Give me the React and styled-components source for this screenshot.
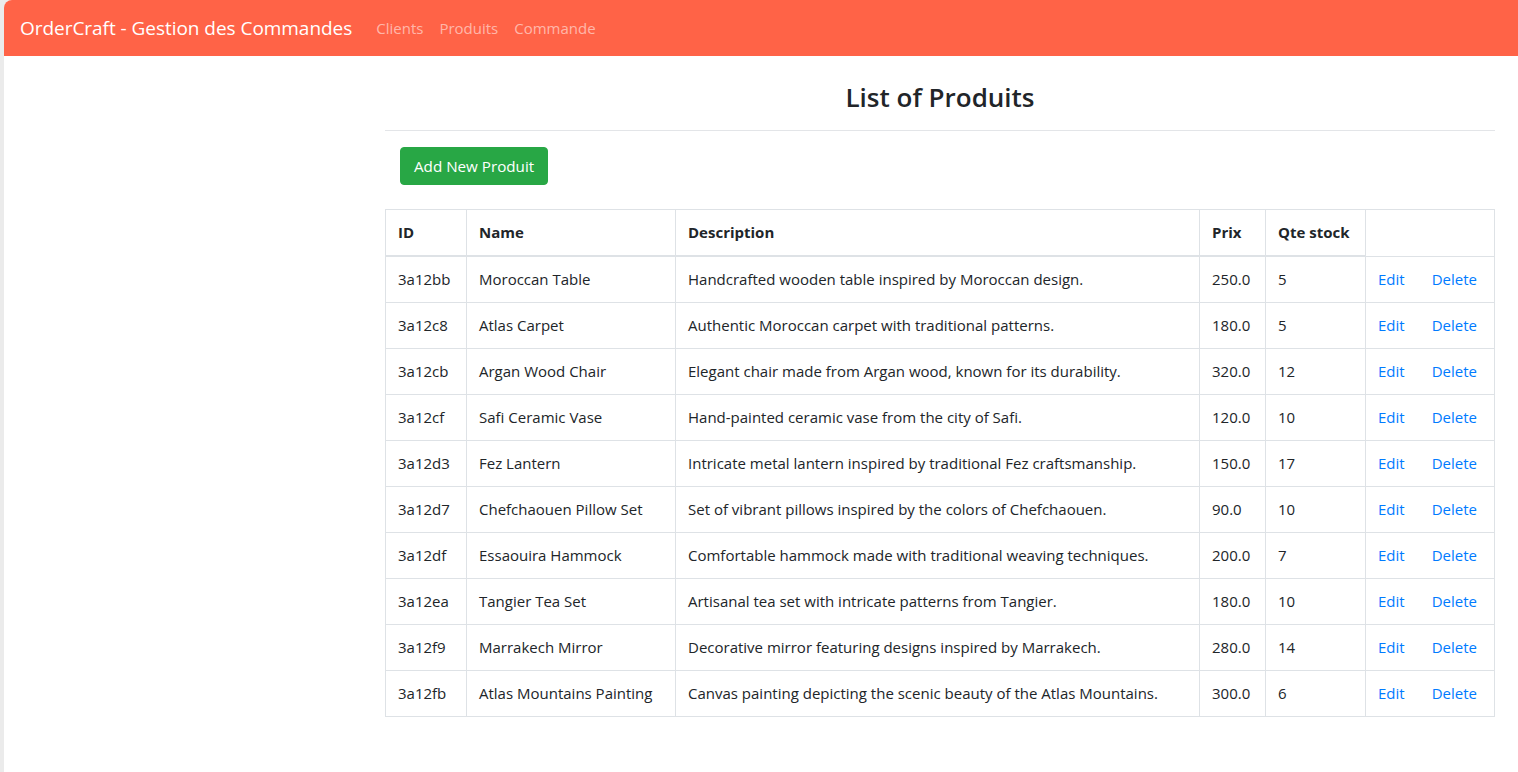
import React from 'react'
import styled, { createGlobalStyle } from 'styled-components'

const GlobalStyle = createGlobalStyle`
  html, body {
    margin: 0;
    padding: 0;
    background: #ebebeb;
  }
  body {
    font-family: "Open Sans", "Noto Sans", Arial, sans-serif;
    color: #212529;
  }
`;

const Frame = styled.div`
  margin-left: 4px;
  min-height: 772px;
  background: #fff;
  border-top-left-radius: 8px;
  overflow: hidden;
`;

const Navbar = styled.nav`
  height: 56px;
  background-color: #ff6347;
  display: flex;
  align-items: center;
  padding: 0 16px;
  box-sizing: border-box;
`;

const Brand = styled.a`
  font-size: 19px;
  color: #fff;
  text-decoration: none;
  margin-right: 24px;
  letter-spacing: -0.04px;
`;

const NavList = styled.ul`
  display: flex;
  list-style: none;
  margin: 0;
  padding: 0;
  gap: 16px;
`;

const NavLink = styled.a`
  font-size: 15px;
  color: rgba(255, 255, 255, 0.55);
  text-decoration: none;
`;

const Main = styled.main`
  padding: 0 23px 0 381px;
`;

const Title = styled.h2`
  margin: 0;
  padding: 23px 0 15px;
  text-align: center;
  font-size: 26px;
  font-weight: 600;
  line-height: 36px;
  border-bottom: 1px solid #e3e5e8;
`;

const Toolbar = styled.div`
  padding: 16px 15px 24px;
`;

const AddButton = styled.button`
  height: 38px;
  padding: 0 13px;
  background-color: #28a745;
  color: #fff;
  border: 1px solid #28a745;
  border-radius: 4px;
  font-family: inherit;
  font-size: 15.2px;
  cursor: pointer;
`;

const Table = styled.table`
  width: 1109px;
  border-collapse: collapse;
  table-layout: fixed;
  font-size: 15px;
`;

const Th = styled.th`
  text-align: left;
  font-weight: 700;
  padding: 11px 12px;
  line-height: 23px;
  border: 1px solid #dee2e6;
  border-bottom: ${p => (p.$thin ? '1px' : '2px')} solid #dee2e6;
`;

const Td = styled.td`
  padding: 11px 12px;
  line-height: 23px;
  border: 1px solid #dee2e6;
  white-space: nowrap;
`;

const Actions = styled.div`
  display: flex;
  gap: 27px;
`;

const ActionLink = styled.a`
  color: #007bff;
  text-decoration: none;
`;

const produits = [
  ['3a12bb', 'Moroccan Table', 'Handcrafted wooden table inspired by Moroccan design.', '250.0', 5],
  ['3a12c8', 'Atlas Carpet', 'Authentic Moroccan carpet with traditional patterns.', '180.0', 5],
  ['3a12cb', 'Argan Wood Chair', 'Elegant chair made from Argan wood, known for its durability.', '320.0', 12],
  ['3a12cf', 'Safi Ceramic Vase', 'Hand-painted ceramic vase from the city of Safi.', '120.0', 10],
  ['3a12d3', 'Fez Lantern', 'Intricate metal lantern inspired by traditional Fez craftsmanship.', '150.0', 17],
  ['3a12d7', 'Chefchaouen Pillow Set', 'Set of vibrant pillows inspired by the colors of Chefchaouen.', '90.0', 10],
  ['3a12df', 'Essaouira Hammock', 'Comfortable hammock made with traditional weaving techniques.', '200.0', 7],
  ['3a12ea', 'Tangier Tea Set', 'Artisanal tea set with intricate patterns from Tangier.', '180.0', 10],
  ['3a12f9', 'Marrakech Mirror', 'Decorative mirror featuring designs inspired by Marrakech.', '280.0', 14],
  ['3a12fb', 'Atlas Mountains Painting', 'Canvas painting depicting the scenic beauty of the Atlas Mountains.', '300.0', 6],
];

const App = () => {
  return (
    <>
      <GlobalStyle />
      <Frame>
        <Navbar>
          <Brand href="#">OrderCraft - Gestion des Commandes</Brand>
          <NavList>
            <li><NavLink href="#">Clients</NavLink></li>
            <li><NavLink href="#">Produits</NavLink></li>
            <li><NavLink href="#">Commande</NavLink></li>
          </NavList>
        </Navbar>
        <Main>
          <Title>List of Produits</Title>
          <Toolbar>
            <AddButton>Add New Produit</AddButton>
          </Toolbar>
          <Table>
            <colgroup>
              <col style={{ width: 81 }} />
              <col style={{ width: 209 }} />
              <col style={{ width: 524 }} />
              <col style={{ width: 66 }} />
              <col style={{ width: 100 }} />
              <col style={{ width: 129 }} />
            </colgroup>
            <thead>
              <tr>
                <Th>ID</Th>
                <Th>Name</Th>
                <Th>Description</Th>
                <Th>Prix</Th>
                <Th>Qte stock</Th>
                <Th $thin></Th>
              </tr>
            </thead>
            <tbody>
              {produits.map(([id, name, desc, prix, qte]) => (
                <tr key={id}>
                  <Td>{id}</Td>
                  <Td>{name}</Td>
                  <Td>{desc}</Td>
                  <Td>{prix}</Td>
                  <Td>{qte}</Td>
                  <Td>
                    <Actions>
                      <ActionLink href="#">Edit</ActionLink>
                      <ActionLink href="#">Delete</ActionLink>
                    </Actions>
                  </Td>
                </tr>
              ))}
            </tbody>
          </Table>
        </Main>
      </Frame>
    </>
  )
}

export default App
